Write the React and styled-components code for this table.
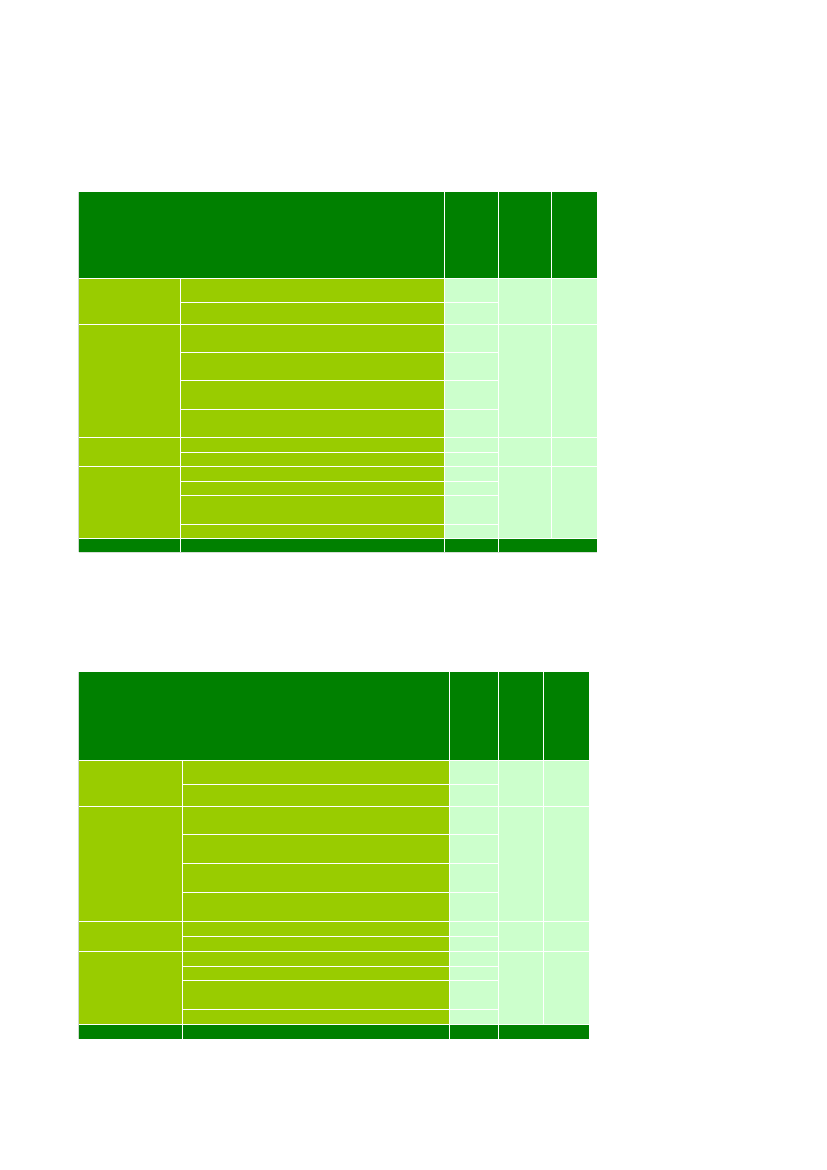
import React from 'react';
import styled, { createGlobalStyle } from 'styled-components';

const GlobalStyle = createGlobalStyle`
  html, body { margin: 0; padding: 0; background: #ffffff; }
  body { font-family: "Liberation Sans", Arial, sans-serif; }
`;

const Page = styled.main`
  display: flex;
  flex-direction: column;
  align-items: flex-start;
  gap: 120px;
  padding: 192px 0 0 79px;
`;

const Grid = styled.div`
  display: grid;
  grid-template-columns: ${(p) => p.$cols.map((c) => `${c}px`).join(' ')};
  grid-template-rows: ${(p) => p.$rows.map((r) => `${r}px`).join(' ')};
  gap: 1px;
  background: #ffffff;
  box-shadow: -1px 0 0 #cdd9cd, 0 1px 0 #d6dfd6;
`;

const tones = {
  head: '#008000',
  lime: '#99cc00',
  pale: '#ccffcc',
};

const Cell = styled.div`
  background: ${(p) => tones[p.$tone]};
  grid-column: ${(p) => p.$col};
  grid-row: ${(p) => p.$row};
`;

const tables = [
  {
    id: 't1',
    cols: [101, 263, 53, 52, 45],
    rows: [86, 23, 21, 27, 27, 28, 27, 14, 13, 14, 13, 28, 13, 13],
    groups: [2, 4, 2, 4],
  },
  {
    id: 't2',
    cols: [103, 266, 48, 44, 45],
    rows: [88, 23, 21, 27, 28, 28, 28, 14, 14, 14, 13, 28, 14, 14],
    groups: [2, 4, 2, 4],
  },
];

function buildCells(groups) {
  const cells = [
    { k: 'h12', tone: 'head', col: '1 / 3', row: '1' },
    { k: 'h3', tone: 'head', col: '3', row: '1' },
    { k: 'h4', tone: 'head', col: '4', row: '1' },
    { k: 'h5', tone: 'head', col: '5', row: '1' },
  ];
  let r = 2;
  groups.forEach((n, g) => {
    cells.push({ k: `g${g}c1`, tone: 'lime', col: '1', row: `${r} / span ${n}` });
    for (let i = 0; i < n; i += 1) {
      cells.push({ k: `g${g}r${i}c2`, tone: 'lime', col: '2', row: `${r + i}` });
      cells.push({ k: `g${g}r${i}c3`, tone: 'pale', col: '3', row: `${r + i}` });
    }
    cells.push({ k: `g${g}c4`, tone: 'pale', col: '4', row: `${r} / span ${n}` });
    cells.push({ k: `g${g}c5`, tone: 'pale', col: '5', row: `${r} / span ${n}` });
    r += n;
  });
  cells.push({ k: 'f1', tone: 'head', col: '1', row: `${r}` });
  cells.push({ k: 'f2', tone: 'head', col: '2', row: `${r}` });
  cells.push({ k: 'f3', tone: 'head', col: '3', row: `${r}` });
  cells.push({ k: 'f45', tone: 'head', col: '4 / 6', row: `${r}` });
  return cells;
}

export default function App() {
  return (
    <>
      <GlobalStyle />
      <Page>
        {tables.map((t) => (
          <Grid key={t.id} $cols={t.cols} $rows={t.rows}>
            {buildCells(t.groups).map((c) => (
              <Cell key={c.k} $tone={c.tone} $col={c.col} $row={c.row} />
            ))}
          </Grid>
        ))}
      </Page>
    </>
  );
}
